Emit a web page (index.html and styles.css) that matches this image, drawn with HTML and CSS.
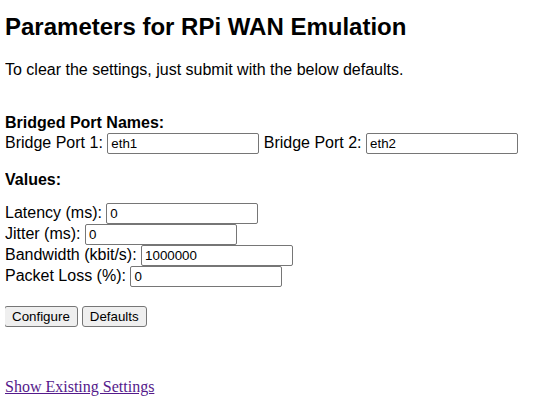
FILE: index.html
```html
<!DOCTYPE html>
<html>
<head>
<meta charset="utf-8">
<link rel="stylesheet" href="styles.css">
</head>
<body class="page">
<h2 class="title">Parameters for RPi WAN Emulation</h2>
<p class="intro">To clear the settings, just submit with the below defaults.</p>
<form class="form">
  <div class="section">
    <div class="heading">Bridged Port Names:</div>
    <div class="row">
      <label>Bridge Port 1: <input class="field" type="text" value="eth1"></label>
      <label>Bridge Port 2: <input class="field" type="text" value="eth2"></label>
    </div>
  </div>
  <div class="section">
    <div class="heading">Values:</div>
    <div class="values">
      <label>Latency (ms): <input class="field" type="text" value="0"></label>
      <label>Jitter (ms): <input class="field" type="text" value="0"></label>
      <label>Bandwidth (kbit/s): <input class="field" type="text" value="1000000"></label>
      <label>Packet Loss (%): <input class="field" type="text" value="0"></label>
    </div>
  </div>
  <div class="buttons">
    <button class="btn" type="submit">Configure</button>
    <button class="btn" type="button">Defaults</button>
  </div>
</form>
<a class="link" href="#settings">Show Existing Settings</a>
</body>
</html>
```

FILE: styles.css
```css
.page {
  margin: 0 5px;
  font-family: "Liberation Sans", Arial, sans-serif;
  font-size: 16px;
  color: #000;
  background: #fff;
}
.title {
  font-size: 24px;
  font-weight: bold;
  margin: 13px 0 0;
}
.intro {
  margin: 20px 0 0;
}
.form {
  margin-top: 35px;
}
.heading {
  font-weight: bold;
}
.row {
  margin-top: 1px;
}
.section + .section .heading {
  margin-top: 17px;
  margin-bottom: 14px;
}
.values label {
  display: block;
}
.field {
  font-family: "Liberation Sans", Arial, sans-serif;
  font-size: 13.33px;
  width: 152px;
  height: 21px;
  padding: 2px 3px;
  border: 1px solid #767676;
  border-radius: 2px;
  margin: 0;
  box-sizing: border-box;
  vertical-align: baseline;
  color: #000;
  background: #fff;
}
.buttons {
  margin-top: 19px;
  margin-left: -1px;
  display: flex;
  gap: 4px;
}
.btn {
  font-family: "Liberation Sans", Arial, sans-serif;
  font-size: 13.33px;
  height: 21px;
  background: #efefef;
  border: 1px solid #767676;
  border-radius: 3px;
  padding: 1px 7px;
  color: #000;
}
.link {
  display: inline-block;
  margin-top: 51px;
  font-family: "Liberation Serif", "Times New Roman", serif;
  color: #551a8b;
}
```
